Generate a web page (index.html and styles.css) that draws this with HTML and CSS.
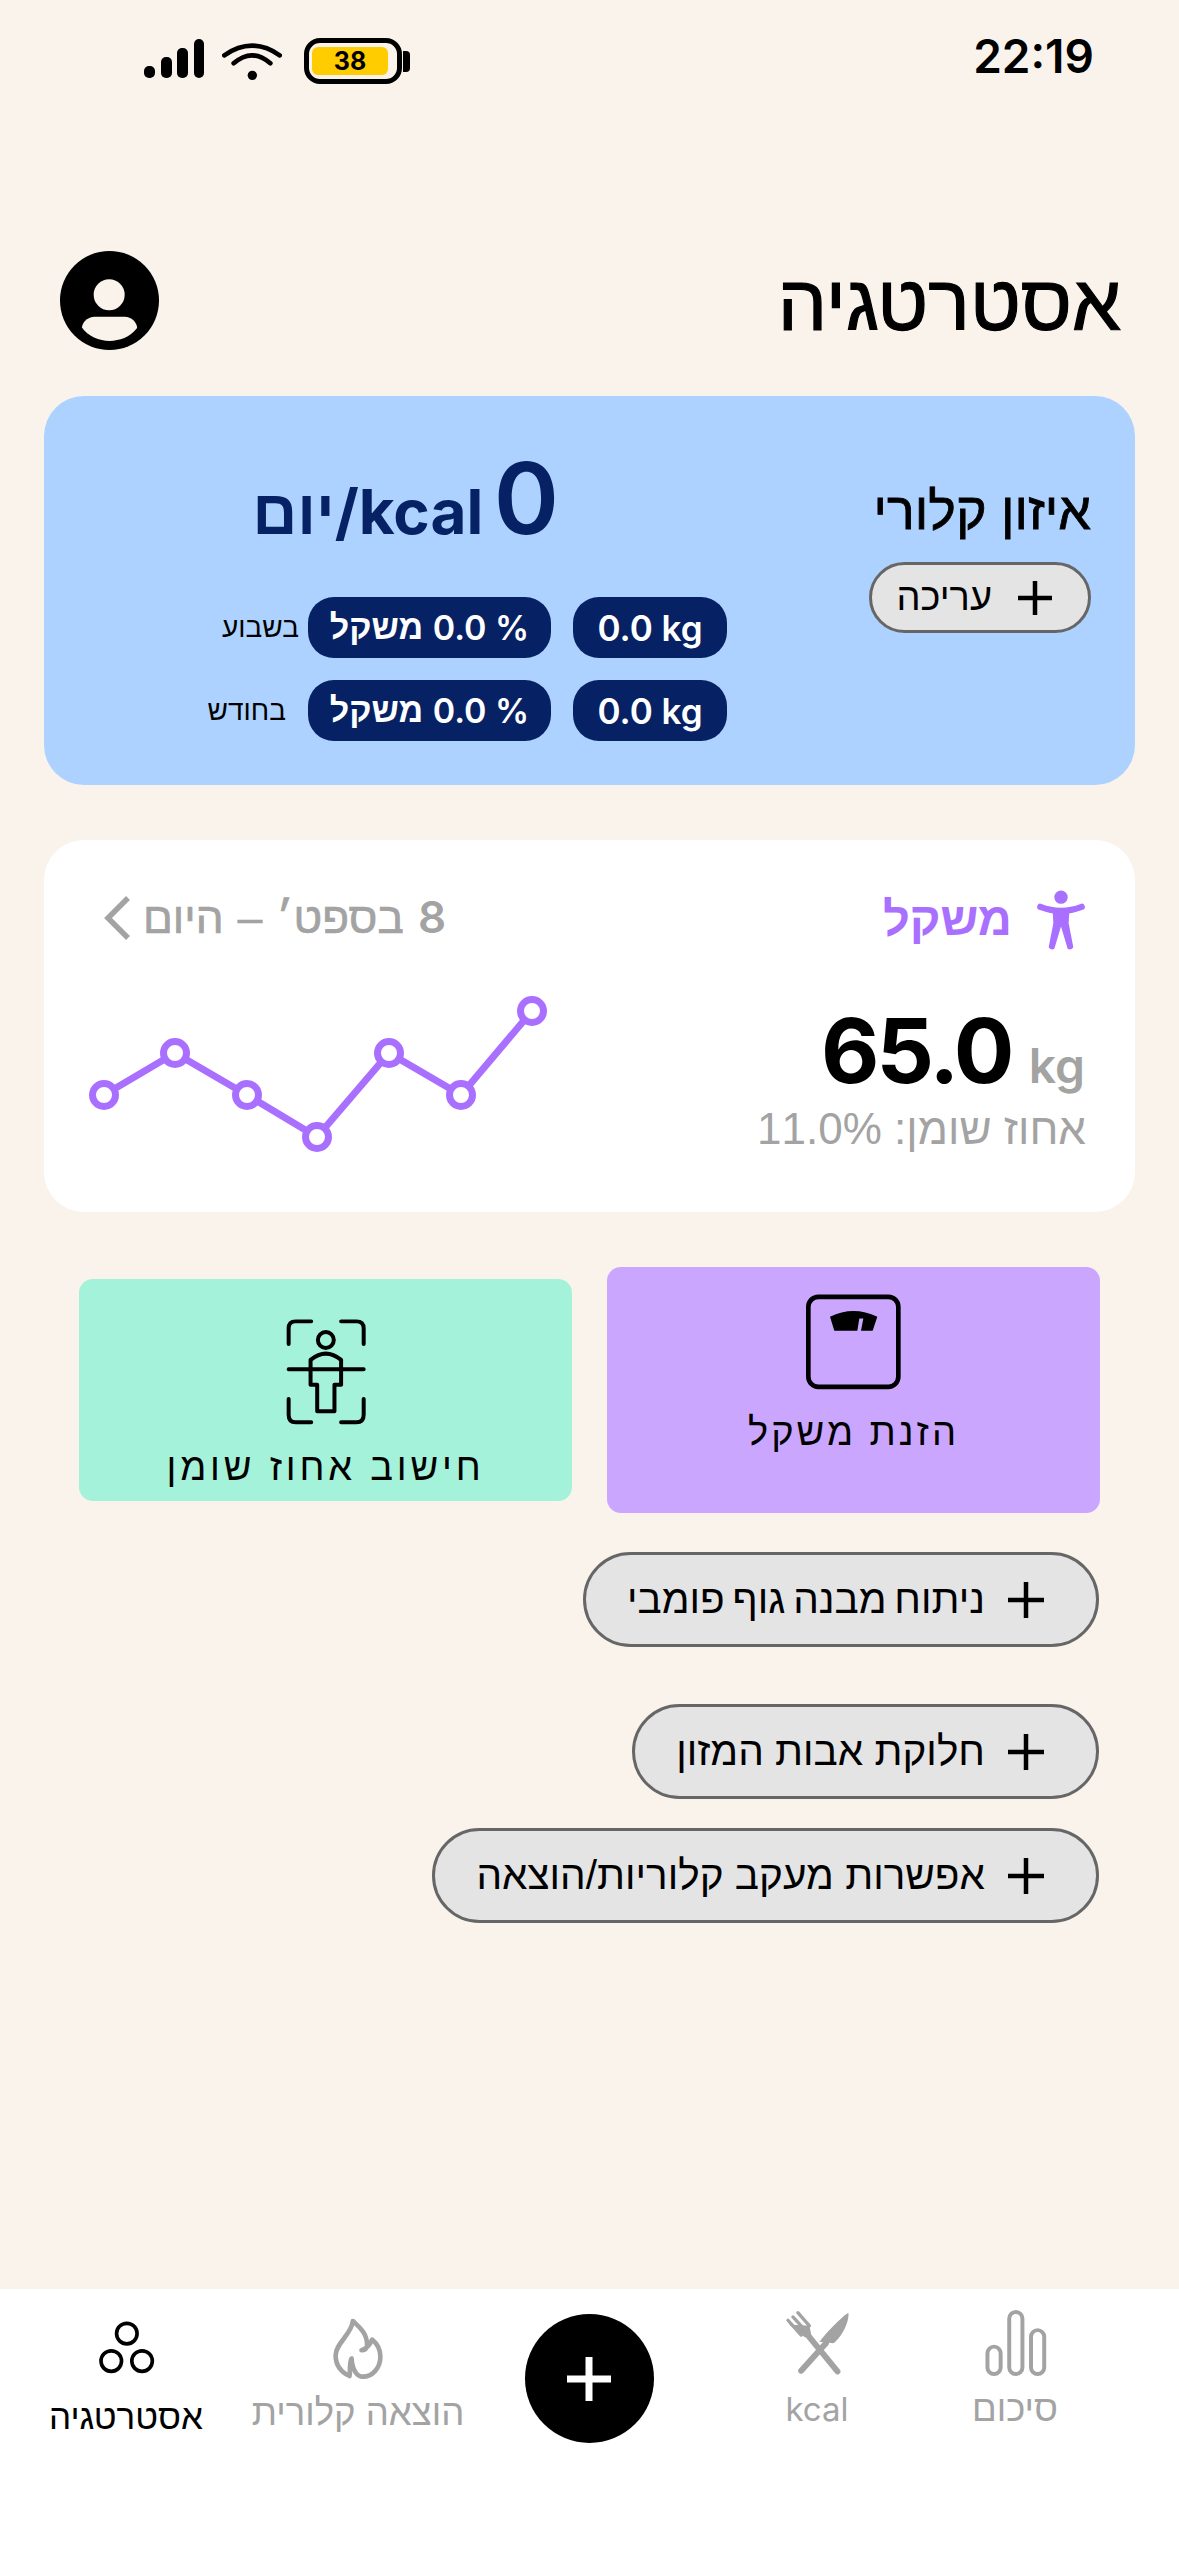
FILE: index.html
```html
<!DOCTYPE html>
<html lang="he" dir="rtl">
<head>
<meta charset="utf-8">
<title>אסטרטגיה</title>
<link rel="stylesheet" href="styles.css">
</head>
<body>
<div class="app">
  <div class="status">
    <span class="time num" dir="ltr">22:19</span>
    <div class="status-icons" dir="ltr">
      <svg class="signal" viewBox="0 0 60 39"><rect x="0" y="27" width="11" height="12" rx="5"/><rect x="17" y="18" width="11" height="21" rx="5"/><rect x="33" y="9" width="11" height="30" rx="5"/><rect x="50" y="0" width="10" height="39" rx="5"/></svg>
      <svg class="wifi" viewBox="305 65 180 120"><path d="M312 108Q395 50 478 108M340 132Q395 84 450 132" fill="none" stroke="#000" stroke-width="14" stroke-linecap="round"/><circle cx="396" cy="168" r="14"/></svg>
      <div class="battery"><div class="battery-fill num">38</div></div>
      <div class="battery-nub"></div>
    </div>
  </div>

  <header class="header">
    <h1 class="title">אסטרטגיה</h1>
    <svg class="avatar" viewBox="33 33 294 294"><circle cx="180" cy="180" r="147"/><circle cx="179" cy="163" r="46" fill="#faf3ec"/><path d="M98 260C100 240 120 228 135 228L225 228C245 228 262 245 262 262C240 290 210 300 180 300C150 300 115 285 98 260Z" fill="#faf3ec"/></svg>
  </header>

  <section class="balance">
    <div class="balance-side">
      <div class="balance-title">איזון קלורי</div>
      <div class="pill pill-edit">
        <svg class="plus-small" viewBox="0 0 34 34"><path d="M17 0V34M0 17H34" stroke="#000" stroke-width="4.5"/></svg>
        <span>עריכה</span>
      </div>
    </div>
    <div class="balance-main">
      <div class="kcal"><span class="kcal-num num">0</span> <span class="kcal-unit"><span class="num">kcal/</span>יום</span></div>
      <div class="rate-row">
        <span class="chip num" dir="ltr">0.0 kg</span>
        <span class="chip chip-wide"><span class="num">% 0.0</span> משקל</span>
        <span class="rate-label">בשבוע</span>
      </div>
      <div class="rate-row rate-row-month">
        <span class="chip num" dir="ltr">0.0 kg</span>
        <span class="chip chip-wide"><span class="num">% 0.0</span> משקל</span>
        <span class="rate-label">בחודש</span>
      </div>
    </div>
  </section>

  <section class="weight">
    <div class="weight-head">
      <svg class="person" viewBox="50 28 150 185"><circle cx="125" cy="52" r="20" fill="#a96fff"/><path d="M63 81Q125 105 187 81" fill="none" stroke="#a96fff" stroke-width="19" stroke-linecap="round"/><path d="M100 92L150 92L148 130L162 202Q155 212 145 207L125 140L105 207Q95 212 88 202L102 130Z" fill="#a96fff"/></svg>
      <div class="weight-title">משקל</div>
      <div class="weight-range"><span class="num range-day">8</span> בספט׳ – היום</div>
      <svg class="chevron" viewBox="0 0 26 44"><path d="M24 2L4 22L24 42" fill="none" stroke="#a3a3a3" stroke-width="5.5"/></svg>
    </div>
    <div class="weight-body">
      <div class="weight-stats">
        <div class="weight-value num" dir="ltr"><span class="weight-num">65.0</span><span class="weight-unit">kg</span></div>
        <div class="weight-fat">אחוז שומן: 11.0%</div>
      </div>
      <svg class="chart" viewBox="86 992 464 160"><polyline points="104,1095 175,1053 247,1095 317,1137 389,1053 461,1095 532,1011" fill="none" stroke="#a96fff" stroke-width="7"/><g fill="#fff" stroke="#a96fff" stroke-width="7"><circle cx="104" cy="1095" r="11.5"/><circle cx="175" cy="1053" r="11.5"/><circle cx="247" cy="1095" r="11.5"/><circle cx="317" cy="1137" r="11.5"/><circle cx="389" cy="1053" r="11.5"/><circle cx="461" cy="1095" r="11.5"/><circle cx="532" cy="1011" r="11.5"/></g></svg>
    </div>
  </section>

  <div class="actions">
    <div class="action action-weigh">
      <svg class="scale" viewBox="78 72 285 287"><rect x="85" y="80" width="270" height="270" rx="30" fill="none" stroke="#000" stroke-width="14"/><path d="M150 140Q220 105 292 140L278 182L243 182L250 145L238 145L232 182L163 182Z"/></svg>
      <span class="action-label">הזנת משקל</span>
    </div>
    <div class="action action-fat">
      <svg class="scan" viewBox="100 145 250 320"><g fill="none" stroke="#000" stroke-width="12" stroke-linecap="round" stroke-linejoin="round"><path d="M114 222V175Q114 154 135 154H182M272 154H318Q340 154 340 175V222M114 388V435Q114 458 135 458H182M272 458H318Q340 458 340 435V388M114 298H340"/><circle cx="226" cy="210" r="24"/><path d="M180 345V270Q226 232 272 270V345H252V425H200V345Z"/></g></svg>
      <span class="action-label">חישוב אחוז שומן</span>
    </div>
  </div>

  <div class="options">
    <div class="pill pill-option pill-first">
      <svg class="plus-mid" viewBox="0 0 36 36"><path d="M18 0V36M0 18H36" stroke="#000" stroke-width="4.5"/></svg>
      <span>ניתוח מבנה גוף פומבי</span>
    </div>
    <div class="pill pill-option">
      <svg class="plus-mid" viewBox="0 0 36 36"><path d="M18 0V36M0 18H36" stroke="#000" stroke-width="4.5"/></svg>
      <span>חלוקת אבות המזון</span>
    </div>
    <div class="pill pill-option pill-third">
      <svg class="plus-mid" viewBox="0 0 36 36"><path d="M18 0V36M0 18H36" stroke="#000" stroke-width="4.5"/></svg>
      <span>אפשרות מעקב קלוריות/הוצאה</span>
    </div>
  </div>

  <nav class="nav">
    <div class="nav-item">
      <svg class="nav-bars" viewBox="670 64 190 200"><g fill="none" stroke="#a3a3a3" stroke-width="12"><rect x="680" y="175" width="40" height="83" rx="20"/><rect x="746" y="70" width="40" height="188" rx="20"/><rect x="812" y="125" width="40" height="133" rx="20"/></g></svg>
      <span class="nav-label">סיכום</span>
    </div>
    <div class="nav-item">
      <svg class="nav-food" viewBox="74 64 198 200"><g fill="none" stroke="#a3a3a3" stroke-linecap="round"><path d="M235 250L145 140M125 248L200 165" stroke-width="18"/><path d="M85 95L125 140M100 85L140 128M115 72L150 112" stroke-width="10"/></g><path d="M88 108L150 112L158 150L135 146Z" fill="#a3a3a3"/><path d="M268 72C240 90 200 135 180 160L222 165C245 150 272 100 268 72Z" fill="#a3a3a3"/></svg>
      <span class="nav-label num">kcal</span>
    </div>
    <div class="nav-item">
      <div class="nav-add"><svg class="nav-add-plus" viewBox="0 0 44 44"><path d="M22 0V44M0 22H44" stroke="#fff" stroke-width="7"/></svg></div>
    </div>
    <div class="nav-item nav-item-fire">
      <svg class="nav-fire" viewBox="820 80 155 190"><path d="M882 92C895 105 925 125 925 165C925 175 918 182 908 180C925 175 935 160 940 148C955 160 965 180 965 200C965 235 940 260 912 260C895 260 880 240 878 205C870 225 875 245 872 258C845 245 830 225 830 195C830 160 880 130 882 92Z" fill="none" stroke="#a3a3a3" stroke-width="14" stroke-linejoin="round"/></svg>
      <span class="nav-label">הוצאה קלורית</span>
    </div>
    <div class="nav-item nav-item-active">
      <svg class="nav-dots" viewBox="110 92 172 160"><g fill="none" stroke="#000" stroke-width="11"><circle cx="197" cy="130" r="31"/><circle cx="150" cy="213" r="31"/><circle cx="243" cy="213" r="31"/></g></svg>
      <span class="nav-label">אסטרטגיה</span>
    </div>
  </nav>
</div>
</body>
</html>
```
FILE: styles.css
```css
* { box-sizing: border-box; }
html, body { margin: 0; padding: 0; }
body {
  background: #faf3ec;
  color: #000;
  font-family: "Liberation Sans", sans-serif;
}
.num { font-family: "Inter", "Liberation Sans", sans-serif; }
.app {
  width: 1179px;
  height: 2556px;
  display: flex;
  flex-direction: column;
  overflow: hidden;
}

/* status bar */
.status {
  display: flex;
  justify-content: space-between;
  align-items: flex-start;
  padding: 38px 85px 0 144px;
  height: 85px;
}
.time { font-size: 46px; font-weight: 600; line-height: 36px; }
.status-icons { display: flex; align-items: flex-start; }
.signal { width: 60px; height: 39px; margin-top: 1px; margin-right: 18px; }
.wifi { width: 60px; height: 40px; margin-top: 3px; margin-right: 22px; }
.battery {
  width: 98px;
  height: 46px;
  border: 5px solid #000;
  border-radius: 16px;
  padding: 4px 9px 4px 3px;
  display: flex;
}
.battery-fill {
  flex: 1;
  background: #ffcc00;
  border-radius: 6px;
  font-size: 25px;
  font-weight: 700;
  line-height: 28px;
  text-align: center;
}
.battery-nub {
  width: 7px;
  height: 21px;
  margin: 13px 0 0 1px;
  background: #000;
  border-radius: 0 4px 4px 0;
}

/* header */
.header {
  display: flex;
  justify-content: space-between;
  align-items: flex-start;
  margin-top: 166px;
  padding: 0 58px 0 60px;
  height: 98px;
}
.title { margin: 12px 0 0; font-size: 78px; font-weight: 400; line-height: 80px; -webkit-text-stroke: 1.2px #000; }
.avatar { width: 99px; height: 99px; }

/* balance card */
.balance {
  margin: 47px 44px 0;
  padding: 52px 44px 44px 0;
  background: #add2ff;
  border-radius: 40px;
  display: flex;
  gap: 142px;
}
.balance-side { width: 222px; padding-top: 33px; }
.balance-title { font-size: 52px; line-height: 60px; white-space: nowrap; -webkit-text-stroke: 0.8px #000; }
.pill {
  display: flex;
  align-items: center;
  background: #e4e4e4;
  border: 3px solid #666;
  white-space: nowrap;
}
.pill-edit {
  height: 71px;
  width: 222px;
  margin-top: 21px;
  border-radius: 36px;
  padding-right: 36px;
  gap: 26px;
  font-size: 38px;
}
.plus-small { width: 34px; height: 34px; }
.balance-main { flex: 1; }
.kcal {
  padding-right: 168px;
  height: 100px;
  line-height: 100px;
  color: #062264;
  white-space: nowrap;
}
.kcal-num { font-size: 99px; font-weight: 600; }
.kcal-unit { font-size: 62px; font-weight: 700; margin-right: 6px; }
.rate-row {
  display: flex;
  align-items: center;
  margin-top: 49px;
}
.rate-row-month { margin-top: 22px; }
.chip {
  height: 61px;
  width: 154px;
  display: flex;
  align-items: center;
  justify-content: center;
  gap: 0.28em;
  background: #062264;
  color: #fff;
  border-radius: 26px;
  font-size: 35px;
  font-weight: 600;
  white-space: nowrap;
}
.chip-wide { width: 243px; margin-right: 22px; font-size: 34px; }
.rate-label { margin-right: 9px; font-size: 28px; }
.rate-row-month .rate-label { margin-right: 22px; }

/* weight card */
.weight {
  margin: 55px 44px 0;
  padding: 50px 49px 58px 0;
  background: #fff;
  border-radius: 40px;
}
.weight-head { display: flex; align-items: center; height: 62px; }
.person { width: 50px; height: 62px; margin-top: -2px; }
.weight-title {
  margin-right: 24px;
  margin-top: -6px;
  font-size: 47px;
  font-weight: 700;
  color: #a96fff;
}
.weight-range {
  margin-right: auto;
  margin-top: -9px;
  font-size: 44px;
  word-spacing: 2px;
  color: #a3a3a3;
  -webkit-text-stroke: 0.7px #a3a3a3;
}
.range-day { font-weight: 600; -webkit-text-stroke: 0; }
.chevron { width: 26px; height: 44px; margin: -6px 13px 0 60px; }
.weight-body {
  display: flex;
  justify-content: space-between;
  margin-top: 49px;
}
.weight-stats { text-align: right; }
.weight-value {
  display: flex;
  justify-content: flex-end;
  align-items: baseline;
  gap: 17px;
  height: 100px;
  line-height: 100px;
}
.weight-num { font-size: 90px; font-weight: 700; letter-spacing: -2.8px; }
.weight-unit { font-size: 48px; font-weight: 600; color: #a3a3a3; margin-right: 1px; }
.weight-fat {
  margin-top: 3px;
  font-size: 44px;
  line-height: 50px;
  color: #a3a3a3;
  white-space: nowrap;
}
.chart { width: 464px; height: 160px; margin-top: -9px; margin-left: 42px; }

/* action cards */
.actions {
  display: flex;
  align-items: center;
  gap: 35px;
  margin-top: 55px;
  padding: 0 79px;
}
.action {
  width: 493px;
  display: flex;
  flex-direction: column;
  align-items: center;
  border-radius: 14px;
}
.action-label {
  font-size: 38px;
  line-height: 50px;
  letter-spacing: 3px;
}
.action-weigh { background: #cba6ff; padding: 27px 0 56px; }
.action-fat { background: #a4f2d9; padding: 39px 0 9px; }
.action-fat .action-label { letter-spacing: 3.8px; }
.scale { width: 95px; height: 96px; margin-bottom: 17px; }
.scan { width: 83px; height: 107px; margin-bottom: 17px; }

/* option pills */
.options {
  display: flex;
  flex-direction: column;
  align-items: flex-start;
  margin-top: 39px;
  padding-right: 80px;
  gap: 57px;
}
.pill-option {
  height: 95px;
  border-radius: 48px;
  padding: 0 52px 0 41px;
  gap: 23px;
  font-size: 40.5px;
}
.pill-first { word-spacing: -3.5px; }
.pill-third { margin-top: -28px; }
.plus-mid { width: 36px; height: 36px; }

/* bottom nav */
.nav {
  margin-top: auto;
  height: 267px;
  background: #fff;
  display: grid;
  grid-template-columns: 170px 226px 230px 232px 232px;
  padding: 23px 79px 0 10px;
  align-items: start;
}
.nav-item {
  display: flex;
  flex-direction: column;
  align-items: center;
  color: #a3a3a3;
  font-size: 36.5px;
}
.nav-label { line-height: 40px; white-space: nowrap; margin-top: 13px; }
.nav-label.num { font-size: 33px; }
.nav-bars { width: 63px; height: 66px; margin-top: -2px; }
.nav-food { width: 66px; height: 66px; margin-top: -2px; }
.nav-add {
  width: 129px;
  height: 129px;
  margin-top: 2px;
  background: #000;
  border-radius: 50%;
  display: flex;
  align-items: center;
  justify-content: center;
}
.nav-add-plus { width: 44px; height: 44px; }
.nav-item-fire { padding-top: 5px; }
.nav-fire { width: 52px; height: 63px; }
.nav-item-active { padding-top: 9px; color: #000; font-size: 35px; }
.nav-dots { width: 57px; height: 53px; }
.nav-item-active .nav-label { margin-top: 23px; }
```
